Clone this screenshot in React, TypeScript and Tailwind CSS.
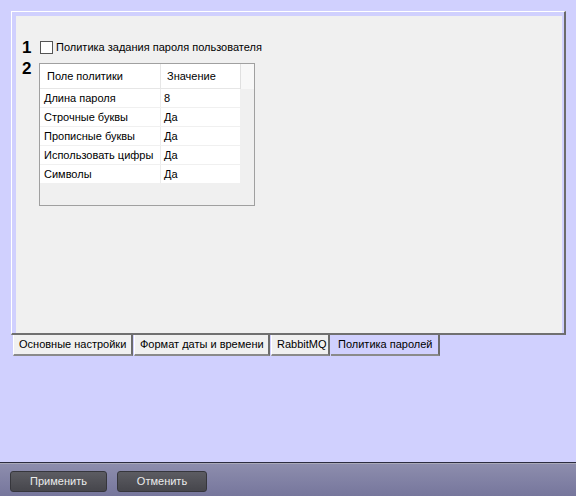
import React from "react";

const rows: [string, string][] = [
  ["Длина пароля", "8"],
  ["Строчные буквы", "Да"],
  ["Прописные буквы", "Да"],
  ["Использовать цифры", "Да"],
  ["Символы", "Да"],
];

interface TabProps {
  label: string;
  width: string;
  active?: boolean;
}

const Tab = ({ label, width, active }: TabProps) => (
  <div
    className={`${width} h-[21px] flex items-center border-r-2 border-r-[#6c6c6c] border-b-2 border-b-[#8a8a8a] ${
      active ? "bg-[#d0d0fe] pl-[7px]" : "bg-[#f0f0f0] pl-[5px] border-l border-l-white"
    }`}
  >
    <span className="text-[11px] text-black whitespace-nowrap">{label}</span>
  </div>
);

function PolicyTable() {
  return (
    <div className="w-[216px] h-[143px] border border-[#a0a0a0] bg-[#f0f0f0] flex flex-col">
      {/* header */}
      <div className="flex h-[25px]">
        <div className="w-[200px] flex bg-white border-b border-[#e6e6e6]">
          <div className="w-[121px] pl-[7px] flex items-center border-r border-[#e6e6e6] text-[11px]">
            Поле политики
          </div>
          <div className="flex-1 pl-[6px] flex items-center text-[11px]">Значение</div>
        </div>
        <div className="flex-1 bg-[#f8f8f8] border-l border-[#e0e0e0]" />
      </div>
      {rows.map(([name, value]) => (
        <div key={name} className="w-[200px] h-[19px] flex bg-white border-b border-[#f0f0f0]">
          <div className="w-[121px] pl-[4px] flex items-center border-r border-[#ececec] text-[11px] whitespace-nowrap">
            {name}
          </div>
          <div className="flex-1 pl-[3px] flex items-center text-[11px]">{value}</div>
        </div>
      ))}
    </div>
  );
}

export default function App() {
  return (
    <div
      className="w-[576px] h-[496px] bg-[#d0d0fe] flex flex-col overflow-hidden text-black"
      style={{ fontFamily: '"Liberation Sans", Arial, sans-serif' }}
    >
      {/* settings panel */}
      <div className="pt-[11px] pl-[11px]">
        <div className="w-[555px] h-[324px] border-t border-l border-t-white border-l-white border-r-2 border-r-[#6a6a6a] border-b-2 border-b-[#707070] pt-[4px] pl-[4px] pr-[2px] flex">
          <div className="flex-1 bg-[#f0f0f0] pt-[22px] pl-[6px] flex flex-col">
            <div className="flex items-center h-[18px]">
              <span className="w-[18px] text-[17px] font-bold leading-none">1</span>
              <span className="w-[13px] h-[13px] border border-[#555] bg-white" />
              <span className="ml-[3px] text-[11px] whitespace-nowrap">
                Политика задания пароля пользователя
              </span>
            </div>
            <div className="flex mt-[7px]">
              <span className="w-[17px] text-[17px] font-bold leading-none -mt-[3px]">2</span>
              <PolicyTable />
            </div>
          </div>
        </div>
      </div>

      {/* tabs */}
      <div className="flex pl-[13px] gap-[1px]">
        <Tab label="Основные настройки" width="w-[120px]" />
        <Tab label="Формат даты и времени" width="w-[136px]" />
        <Tab label="RabbitMQ" width="w-[59px]" />
        <Tab label="Политика паролей" width="w-[109px]" active />
      </div>

      <div className="flex-1" />

      {/* bottom bar */}
      <div className="h-[34px] border-t border-[#2c2c40] bg-gradient-to-b from-[#8e8eae] to-[#76769c] shadow-[inset_0_1px_0_#a8a8b8] flex items-start pt-[8px] pl-[10px] gap-[10px]">
        <button className="w-[97px] h-[21px] rounded-[3px] border border-[#36363c] bg-gradient-to-b from-[#5c5c62] to-[#46464c] text-[11px] text-[#ececec]">
          Применить
        </button>
        <button className="w-[90px] h-[21px] rounded-[3px] border border-[#36363c] bg-gradient-to-b from-[#5c5c62] to-[#46464c] text-[11px] text-[#ececec]">
          Отменить
        </button>
      </div>
    </div>
  );
}
